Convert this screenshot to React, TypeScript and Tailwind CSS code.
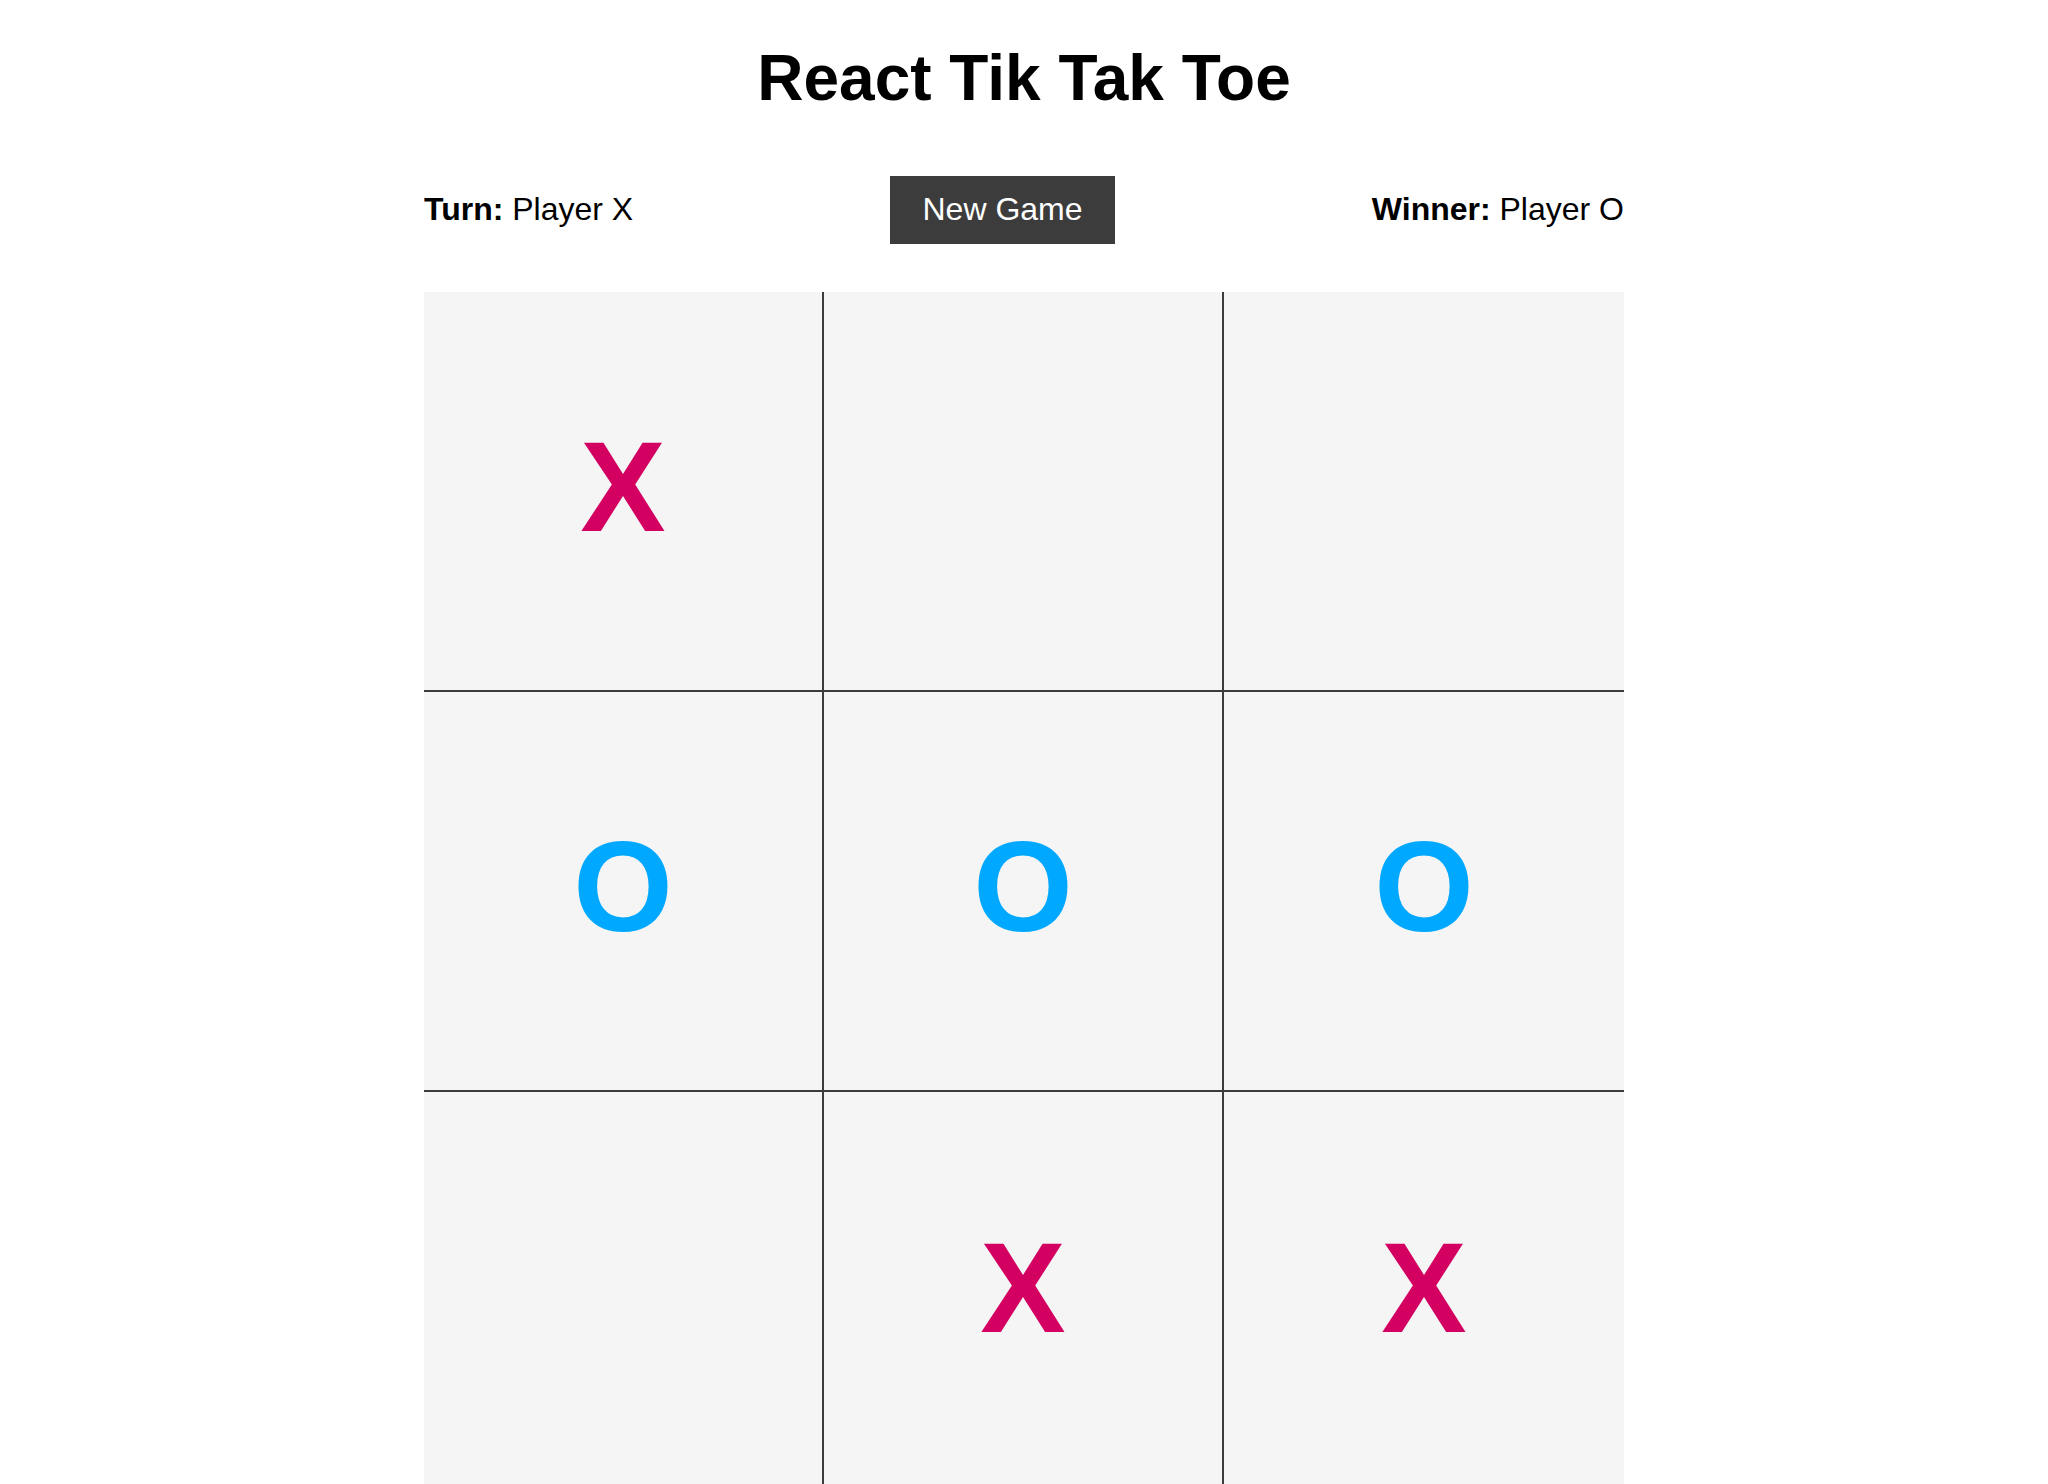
import React, { useState } from "react";

type Mark = "X" | "O" | "";

const startBoard: Mark[] = ["X", "", "", "O", "O", "O", "", "X", "X"];

const Cell = ({ value, index }: { value: Mark; index: number }) => {
  const lastCol = index % 3 === 2;
  const lastRow = index >= 6;
  return (
    <div
      className={`flex h-[400px] w-[400px] items-center justify-center bg-[#f5f5f5] border-[#3c3c3c] ${
        lastCol ? "" : "border-r-2"
      } ${lastRow ? "" : "border-b-2"}`}
    >
      <span
        className={`mb-[9px] text-[128px] font-bold leading-[143px] ${
          value === "X" ? "text-[#d30062]" : "text-[#00a8ff]"
        }`}
      >
        {value}
      </span>
    </div>
  );
};

const App = () => {
  const [board] = useState<Mark[]>(startBoard);

  return (
    <div className="min-h-screen bg-white font-['Liberation_Sans',Arial,sans-serif] text-black">
      <div className="mx-auto w-[1200px] pt-[41px]">
        <h1 className="text-center text-[64px] font-bold leading-[74px]">React Tik Tak Toe</h1>

        <div className="mt-[61px] flex h-[68px] items-center justify-between text-[32px] leading-[37px]">
          <div className="mb-[2px]">
            <span className="font-bold">Turn:</span> Player X
          </div>
          <button className="h-[68px] bg-[#3c3c3c] px-8 pb-[2px] text-[32px] leading-[37px] text-white">
            New Game
          </button>
          <div className="mb-[2px]">
            <span className="font-bold">Winner:</span> Player O
          </div>
        </div>

        <div className="mt-[48px] grid grid-cols-3">
          {board.map((v, i) => (
            <Cell key={i} value={v} index={i} />
          ))}
        </div>
      </div>
    </div>
  );
};

export default App;
